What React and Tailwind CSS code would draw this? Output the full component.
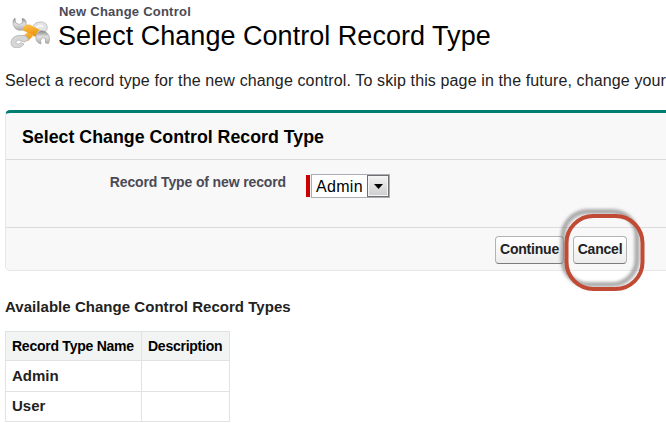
function ToolsIcon() {
  return (
    <svg width="42" height="34" viewBox="0 0 42 34" className="block">
      <defs>
        <linearGradient id="steel" x1="0" y1="0" x2="0" y2="1">
          <stop offset="0" stopColor="#858585" />
          <stop offset="0.45" stopColor="#e2e2e2" />
          <stop offset="1" stopColor="#a8a8a8" />
        </linearGradient>
        <linearGradient id="grip" x1="0" y1="0" x2="0.3" y2="1">
          <stop offset="0" stopColor="#fbc44c" />
          <stop offset="1" stopColor="#ee930f" />
        </linearGradient>
      </defs>
      <path d="M23 12 C25 9 27 8 31 8 C35 8 38 11 37 15 C36 18 34 19 30 19" fill="#e4e4e4" stroke="#c2c2c2" strokeWidth="1" />
      <path d="M27 14 C28 11 31 11 33 13" fill="none" stroke="#f8f8f8" strokeWidth="2" />
      <path d="M12 23 L18 18 L23 22 L18 27Z" fill="url(#grip)" />
      <path d="M15 21.5 L10 21.5 C4 21.5 1 25 1 29 C1 33 5 34.5 9 33.5 C12 33 13 31 14 30 L11 28.5 C9 31 6 30 6 28 C6 26 9 25.5 11 27 L15 28 L19 25Z" fill="#d6d6d6" stroke="#b3b3b3" strokeWidth=".8" />
      <path d="M5 4 C2 6 2.5 12 6 15 C9 17 11 16 13 16 L15 17 L19 12 L16 11 C17 7 15 4.5 12 4.5 L12.5 9 L9 10.5 L5.5 8.5Z" fill="url(#steel)" stroke="#999" strokeWidth=".6" />
      <path d="M12.5 16 C13 12.5 16 10 19.5 10.5 L30 16 C28 17 26 20 25.5 23Z" fill="url(#grip)" />
      <path d="M26 22 C27 17.5 31 15.5 35 17.5 C39.5 20 40.5 25 38.5 29.5 L35.5 29 L35.5 24.5 L32.5 23.5 L30.5 26 L31 30 C27 29 25.5 26 26 22Z" fill="url(#steel)" stroke="#a0a0a0" strokeWidth=".7" />
    </svg>
  );
}

function Button({ children, className }) {
  return (
    <button className={`h-[28px] shrink-0 rounded-[4px] border border-[#b3b3b3] border-b-[#7c7c7c] bg-gradient-to-b from-white to-[#ededed] pb-[2px] text-center text-[14px] leading-[24px] font-bold tracking-[-0.2px] whitespace-nowrap text-[#222] ${className}`}>
      {children}
    </button>
  );
}

export default function App() {
  return (
    <div className="h-[423px] w-[666px] overflow-hidden bg-white font-['Liberation_Sans',Arial,sans-serif] text-[#222]">
      <header className="flex h-[58px] pl-[10px]">
        <div className="w-[48px] shrink-0 pt-[14px]"><ToolsIcon /></div>
        <div className="pt-[4px] whitespace-nowrap">
          <div className="ml-px h-[16px] text-[13px] leading-[16px] font-bold tracking-[0.23px] text-[#4a4a56]">New Change Control</div>
          <h1 className="h-[32px] text-[27px] leading-[32px] tracking-[0.03px] text-black">Select Change Control Record Type</h1>
        </div>
      </header>
      <p className="h-[52px] pt-[13px] pl-[5px] text-[16px] leading-[20px] tracking-[0.13px] whitespace-nowrap">
        Select a record type for the new change control. To skip this page in the future, change your
      </p>
      <section className="ml-[5px] h-[161px] w-[680px] rounded-[5px] border border-t-[3px] border-[#e6e6e6] border-t-[#007d71] bg-[#f8f8f8]">
        <h2 className="h-[47px] border-b border-[#dbdbdb] pt-[14px] pl-[16px] text-[17.8px] leading-[20px] font-bold text-black">Select Change Control Record Type</h2>
        <div className="flex h-[67px] items-start pt-[13px]">
          <label className="w-[280px] pt-px text-right text-[14px] leading-[16px] font-bold tracking-[-0.13px] whitespace-nowrap text-[#4a4a56]">Record Type of new record</label>
          <div className="mt-[2px] ml-[20px] h-[22px] w-[4px] bg-[#c00]" />
          <div className="mt-px ml-px flex h-[24px] w-[79px] items-stretch justify-between border border-[#abadb3] bg-white pl-[4px] text-[16px] leading-[23px] tracking-[0.3px] text-black">
            Admin
            <span className="flex w-[22px] items-center justify-center border border-[#707070] bg-gradient-to-b from-[#f3f3f3] to-[#cecece] shadow-[inset_0_0_0_1px_#f5f5f5]">
              <svg width="9" height="5" viewBox="0 0 9 5"><path d="M0 0H9L4.5 5Z" fill="#000" /></svg>
            </span>
          </div>
        </div>
        <div className="relative flex h-[43px] border-t border-[#dbdbdb] pt-[8px] pl-[489px]">
          <Button className="w-[69px]">Continue</Button>
          <Button className="ml-[9px] w-[54px]">Cancel</Button>
          <svg className="pointer-events-none absolute top-[-24px] left-[548px]" width="100" height="96">
            <defs><filter id="soft" x="-20%" y="-20%" width="140%" height="140%"><feGaussianBlur stdDeviation="1.5" /></filter></defs>
            <rect x="9" y="7.5" width="74" height="73" rx="25" fill="none" stroke="#777" strokeOpacity=".6" strokeWidth="5" filter="url(#soft)" />
            <rect x="12.5" y="12" width="76" height="73" rx="27" fill="none" stroke="#c04a33" strokeWidth="4" />
          </svg>
        </div>
      </section>
      <h3 className="h-[60px] pt-[26px] pl-[5px] text-[15px] leading-[20px] font-bold tracking-[0.04px]">Available Change Control Record Types</h3>
      <table className="ml-[5px] w-[224px] table-fixed border-collapse text-left whitespace-nowrap">
        <colgroup><col className="w-[136px]" /><col className="w-[88px]" /></colgroup>
        <thead>
          <tr className="h-[29px] bg-[#f2f3f3] text-[14px] leading-[16px] tracking-[-0.25px] text-black">
            <th className="border border-[#e0e3e5] pt-0 pr-0 pb-px pl-[6px]">Record Type Name</th>
            <th className="border border-[#e0e3e5] pt-0 pr-0 pb-px pl-[6px]">Description</th>
          </tr>
        </thead>
        <tbody className="text-[15px] leading-[18px]">
          <tr className="h-[31px]"><th className="border border-[#e0e3e5] py-0 pl-[6px]">Admin</th><td className="border border-[#e0e3e5]" /></tr>
          <tr className="h-[30px]"><th className="border border-[#e0e3e5] pt-0 pb-[2px] pl-[6px]">User</th><td className="border border-[#e0e3e5]" /></tr>
        </tbody>
      </table>
    </div>
  );
}
